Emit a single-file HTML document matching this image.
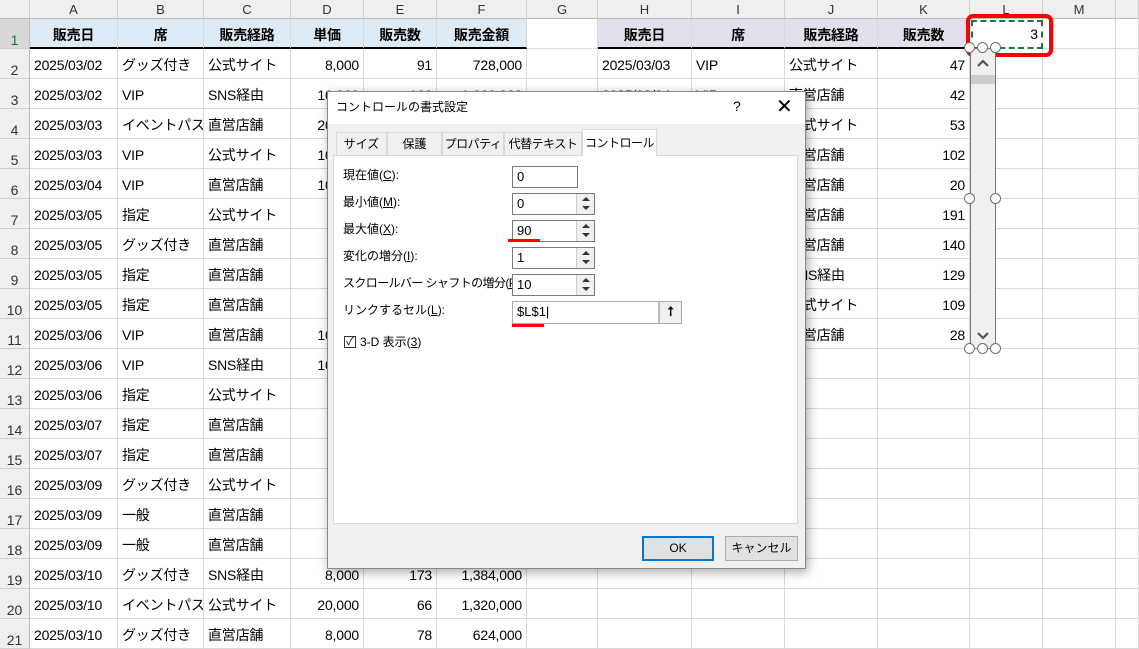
<!DOCTYPE html>
<html><head><meta charset="utf-8">
<style>
*{box-sizing:border-box;margin:0;padding:0}
body{width:1139px;height:647px;overflow:hidden;background:#fff;position:relative;font-family:"Liberation Sans","Noto Sans CJK JP",sans-serif;color:#000}
.a{position:absolute}
.c{position:absolute;border-right:1px solid #d9d9d9;border-bottom:1px solid #d9d9d9;font-size:14px;line-height:29px;padding:2px 4px 0;white-space:nowrap;overflow:hidden;letter-spacing:-0.2px}
.ch{position:absolute;top:0;height:19px;background:#efefef;border-right:1px solid #d0d0d0;border-bottom:1px solid #bdbdbd;font-size:13px;line-height:19px;text-align:center;color:#333}
.rh{position:absolute;left:0;width:30px;background:#efefef;border-right:1px solid #bdbdbd;border-bottom:1px solid #d0d0d0;font-size:14px;text-align:center;color:#333;line-height:16px;padding-top:13px}
.r{text-align:right}
.hb{font-weight:bold;text-align:center;border-bottom:2px solid #000}
.dl{font-size:12px;white-space:nowrap;font-family:"Liberation Sans","Noto Sans CJK JP",sans-serif}
.inp{position:absolute;background:#fff;border:1px solid #7a7a7a;font-size:13px;line-height:20px;padding-left:4px}
.sp{position:absolute;right:0;top:0;width:18px;height:100%;border-left:1px solid #ccc;background:#f0f0f0}
.sp i{position:absolute;left:5px;width:0;height:0;border-left:4px solid transparent;border-right:4px solid transparent}
.hd{position:absolute;width:11px;height:11px;border:1.5px solid #6e6e6e;border-radius:50%;background:#fff}
</style></head><body>
<div id="g"></div>
<script>
var X=[30,118,204,291,364,437,527,598,692,785,878,970,1043,1116,1139];
var L="ABCDEFGHIJKLM ";var h="";
h+='<div class="ch" style="left:0;width:30px"></div>';
for(var i=0;i<14;i++)h+='<div class="ch" style="left:'+X[i]+'px;width:'+(X[i+1]-X[i])+'px">'+L[i]+'</div>';
var d=[
["販売日","席","販売経路","単価","販売数","販売金額"],
["2025/03/02","グッズ付き","公式サイト","8,000","91","728,000"],
["2025/03/02","VIP","SNS経由","10,000","166","1,660,000"],
["2025/03/03","イベントパス","直営店舗","20,000","",""],
["2025/03/03","VIP","公式サイト","10,000","",""],
["2025/03/04","VIP","直営店舗","10,000","",""],
["2025/03/05","指定","公式サイト","","",""],
["2025/03/05","グッズ付き","直営店舗","","",""],
["2025/03/05","指定","直営店舗","","",""],
["2025/03/05","指定","直営店舗","","",""],
["2025/03/06","VIP","直営店舗","10,000","",""],
["2025/03/06","VIP","SNS経由","10,000","",""],
["2025/03/06","指定","公式サイト","","",""],
["2025/03/07","指定","直営店舗","","",""],
["2025/03/07","指定","直営店舗","","",""],
["2025/03/09","グッズ付き","公式サイト","","",""],
["2025/03/09","一般","直営店舗","","",""],
["2025/03/09","一般","直営店舗","","",""],
["2025/03/10","グッズ付き","SNS経由","8,000","173","1,384,000"],
["2025/03/10","イベントパス","公式サイト","20,000","66","1,320,000"],
["2025/03/10","グッズ付き","直営店舗","8,000","78","624,000"]];
var e=[["販売日","席","販売経路","販売数"],["2025/03/03","VIP","公式サイト","47"],["2025/03/04","VIP","直営店舗","42"],["","","公式サイト","53"],["","","直営店舗","102"],["","","直営店舗","20"],["","","直営店舗","191"],["","","直営店舗","140"],["","","SNS経由","129"],["","","公式サイト","109"],["","","直営店舗","28"]];
for(var r=0;r<21;r++){var y=19+r*30;
h+='<div class="rh" style="top:'+y+'px;height:30px'+(r==0?';color:#217346;background:#d8d8d8':'')+'">'+(r+1)+'</div>';
for(var c=0;c<14;c++){var v="",cls="c",st="";
if(c<6)v=d[r][c];if(c>=7&&c<=10&&r<11)v=e[r][c-7];
if(r==0){if(c<6){cls+=" hb";st="background:#ddebf7;"}else if(c>=7&&c<=10){cls+=" hb";st="background:#e4dfec;"}}
else if((c>=3&&c<=5)||c==10)cls+=" r";
h+='<div class="'+cls+'" style="'+st+'left:'+X[c]+'px;top:'+y+'px;width:'+(X[c+1]-X[c])+'px;height:30px">'+v+'</div>';}}
document.getElementById("g").innerHTML=h;
</script>
<div class="a" style="left:971px;top:20px;width:72px;height:29px;border:2px dashed #217346;font-size:14px;text-align:right;line-height:25px;padding-right:3px;background:#fff">3</div>
<div class="a" style="left:966px;top:14px;width:87px;height:43px;border:4px solid #f00;border-radius:7px"></div>
<div class="a" style="left:970px;top:48px;width:26px;height:301px;background:#f0f0f0;border:1px solid #777"></div>
<div class="a" style="left:971px;top:75px;width:24px;height:9px;background:#cdcdcd"></div>
<svg class="a" style="left:976px;top:57px" width="14" height="12"><path d="M2 9 L7 4 L12 9" stroke="#555" stroke-width="2.2" fill="none"/></svg>
<svg class="a" style="left:976px;top:330px" width="14" height="12"><path d="M2 3 L7 8 L12 3" stroke="#555" stroke-width="2.2" fill="none"/></svg>
<div class="hd" style="left:964px;top:42px"></div><div class="hd" style="left:977px;top:42px"></div><div class="hd" style="left:990px;top:42px"></div>
<div class="hd" style="left:964px;top:193px"></div><div class="hd" style="left:990px;top:193px"></div>
<div class="hd" style="left:964px;top:343px"></div><div class="hd" style="left:977px;top:343px"></div><div class="hd" style="left:990px;top:343px"></div>
<div class="a" style="left:327px;top:91px;width:479px;height:478px;background:#f0f0f0;border:1px solid #8a8a8a;box-shadow:2px 3px 10px rgba(0,0,0,.35)">
 <div class="a dl" style="left:0;top:0;width:477px;height:32px;background:#fff;line-height:30px;padding-left:8px">コントロールの書式設定</div>
 <div class="a" style="left:405px;top:6px;font-size:14px">?</div>
 <div class="a" style="left:448px;top:2px;font-size:20px;font-weight:300">✕</div>
 <div class="a" style="left:5px;top:63px;width:465px;height:369px;background:#fff;border:1px solid #d9d9d9"></div>
 <div class="a dl" style="left:8px;top:40px;width:51px;height:24px;border:1px solid #d9d9d9;text-align:center;line-height:22px">サイズ</div>
 <div class="a dl" style="left:59px;top:40px;width:55px;height:24px;border:1px solid #d9d9d9;text-align:center;line-height:22px">保護</div>
 <div class="a dl" style="left:114px;top:40px;width:62px;height:24px;border:1px solid #d9d9d9;text-align:center;line-height:22px;letter-spacing:-0.5px">プロパティ</div>
 <div class="a dl" style="left:176px;top:40px;width:78px;height:24px;border:1px solid #d9d9d9;text-align:center;line-height:22px;letter-spacing:-0.5px">代替テキスト</div>
 <div class="a dl" style="left:254px;top:37px;width:75px;height:27px;border:1px solid #d9d9d9;border-bottom:none;background:#fff;text-align:center;line-height:26px;letter-spacing:-0.5px">コントロール</div>
 <div class="a dl" style="left:15px;top:74px">現在値(<u>C</u>):</div>
 <div class="a dl" style="left:15px;top:101px">最小値(<u>M</u>):</div>
 <div class="a dl" style="left:15px;top:128px">最大値(<u>X</u>):</div>
 <div class="a dl" style="left:15px;top:155px">変化の増分(<u>I</u>):</div>
 <div class="a dl" style="left:15px;top:182px;letter-spacing:-0.6px">スクロールバー シャフトの増分(<u>P</u>):</div>
 <div class="a dl" style="left:15px;top:209px">リンクするセル(<u>L</u>):</div>
 <div class="inp" style="left:184px;top:74px;width:66px;height:22px">0</div>
 <div class="inp" style="left:184px;top:101px;width:83px;height:22px">0<div class="sp"><i style="top:3px;border-bottom:4px solid #333"></i><i style="top:12px;border-top:4px solid #333"></i></div></div>
 <div class="inp" style="left:184px;top:128px;width:83px;height:22px">90<div class="sp"><i style="top:3px;border-bottom:4px solid #333"></i><i style="top:12px;border-top:4px solid #333"></i></div></div>
 <div class="inp" style="left:184px;top:155px;width:83px;height:22px">1<div class="sp"><i style="top:3px;border-bottom:4px solid #333"></i><i style="top:12px;border-top:4px solid #333"></i></div></div>
 <div class="inp" style="left:184px;top:182px;width:83px;height:22px">10<div class="sp"><i style="top:3px;border-bottom:4px solid #333"></i><i style="top:12px;border-top:4px solid #333"></i></div></div>
 <div class="inp" style="left:184px;top:209px;width:170px;height:23px;border-color:#aaa">$L$1|<div class="a" style="right:0;top:0;width:23px;height:21px;background:#f0f0f0;border-left:2px solid #bbb;text-align:center;font-size:13px;font-weight:bold;line-height:20px">⭡</div></div>
 <div class="a" style="left:180px;top:147px;width:32px;height:3px;background:#f00"></div>
 <div class="a" style="left:184px;top:232px;width:32px;height:3px;background:#f00"></div>
 <div class="a" style="left:16px;top:244px;width:12px;height:12px;border:1px solid #333;background:#fff;font-size:11px;line-height:10px;text-align:center">✓</div>
 <div class="a dl" style="left:32px;top:241px">3-D 表示(<u>3</u>)</div>
 <div class="a dl" style="left:314px;top:444px;width:72px;height:25px;border:2px solid #0078d7;background:#e1e1e1;text-align:center;line-height:21px">OK</div>
 <div class="a dl" style="left:397px;top:444px;width:73px;height:25px;border:1px solid #adadad;background:#e1e1e1;text-align:center;line-height:23px">キャンセル</div>
</div>
</body></html>
